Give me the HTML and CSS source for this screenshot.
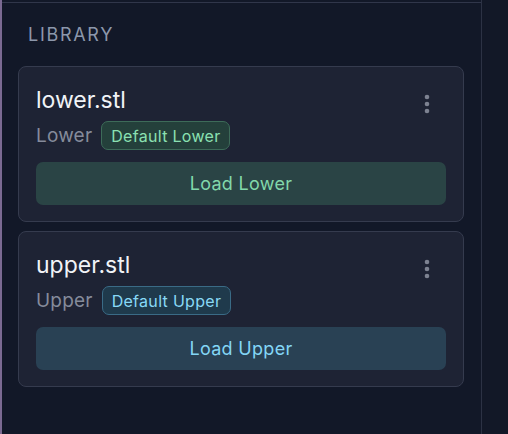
FILE: index.html
```html
<!DOCTYPE html>
<html lang="en">
<head>
<meta charset="utf-8">
<title>Library</title>
<link rel="stylesheet" href="styles.css">
</head>
<body>
<div class="rail"></div>
<aside class="panel">
  <div class="top-rule"></div>
  <h2 class="section-title">LIBRARY</h2>
  <div class="list">
    <article class="card card--lower">
      <div class="card-head">
        <div class="card-name">lower.stl</div>
        <button class="menu-btn" aria-label="More options">
          <svg width="6" height="20" viewBox="0 0 6 20"><circle cx="3" cy="3" r="2.3"/><circle cx="3" cy="10" r="2.3"/><circle cx="3" cy="17" r="2.3"/></svg>
        </button>
      </div>
      <div class="card-meta">
        <span class="card-kind">Lower</span>
        <span class="badge">Default Lower</span>
      </div>
      <button class="load-btn">Load Lower</button>
    </article>
    <article class="card card--upper">
      <div class="card-head">
        <div class="card-name">upper.stl</div>
        <button class="menu-btn" aria-label="More options">
          <svg width="6" height="20" viewBox="0 0 6 20"><circle cx="3" cy="3" r="2.3"/><circle cx="3" cy="10" r="2.3"/><circle cx="3" cy="17" r="2.3"/></svg>
        </button>
      </div>
      <div class="card-meta">
        <span class="card-kind">Upper</span>
        <span class="badge">Default Upper</span>
      </div>
      <button class="load-btn">Load Upper</button>
    </article>
  </div>
</aside>
</body>
</html>
```

FILE: styles.css
```css
* { box-sizing: border-box; }

html, body {
  margin: 0;
  height: 100%;
}

body {
  display: flex;
  background: #121827;
  font-family: Inter, "Noto Sans", sans-serif;
  overflow: hidden;
}

.rail {
  width: 2px;
  flex: none;
  background: #7b6a92;
}

.panel {
  width: 480px;
  flex: none;
  border-right: 1px solid #2c3244;
  padding: 0 17px 0 16px;
  background: #121828;
}

.top-rule {
  height: 1px;
  margin: 2px -17px 0 -16px;
  background: #30364a;
}

.section-title {
  margin: 20px 0 0 10px;
  font-size: 18px;
  line-height: 24px;
  font-weight: 400;
  letter-spacing: 1.7px;
  color: #8c97ab;
}

.list {
  margin-top: 19px;
  display: flex;
  flex-direction: column;
  gap: 9px;
}

.card {
  background: #1e2334;
  border: 1px solid #353b4e;
  border-radius: 8px;
  padding: 16px 17px;
}

.card-head {
  display: flex;
  justify-content: space-between;
  align-items: flex-start;
}

.card-name {
  font-size: 23px;
  line-height: 34px;
  color: #f1f3f7;
  letter-spacing: 0;
}

.menu-btn {
  margin: 7px 5px 0 0;
  width: 28px;
  height: 28px;
  padding: 0;
  border: 0;
  background: transparent;
  display: flex;
  align-items: center;
  justify-content: center;
}

.menu-btn svg { fill: #7d8291; }

.card-meta {
  margin-top: 3px;
  display: flex;
  align-items: center;
  gap: 9px;
}

.card-kind {
  font-size: 19px;
  line-height: 24px;
  color: #858b9b;
  letter-spacing: 0.2px;
}

.badge {
  height: 29px;
  display: inline-flex;
  align-items: center;
  padding: 0 9px;
  border-radius: 7px;
  border: 1.5px solid;
  font-size: 16px;
  letter-spacing: 0.3px;
}

.load-btn {
  margin-top: 12px;
  width: 100%;
  height: 43px;
  border: 0;
  border-radius: 7px;
  font-family: inherit;
  font-size: 18px;
  letter-spacing: 0.3px;
  cursor: pointer;
}

.card--lower .badge {
  background: #24403b;
  border-color: #3d6b59;
  color: #8be0b2;
}

.card--lower .load-btn {
  background: #2a4445;
  color: #82d8ab;
}

.card--upper .badge {
  background: #1f3a4c;
  border-color: #3a6b86;
  color: #88d9f6;
}

.card--upper .load-btn {
  background: #294154;
  color: #83d6f6;
}
```
